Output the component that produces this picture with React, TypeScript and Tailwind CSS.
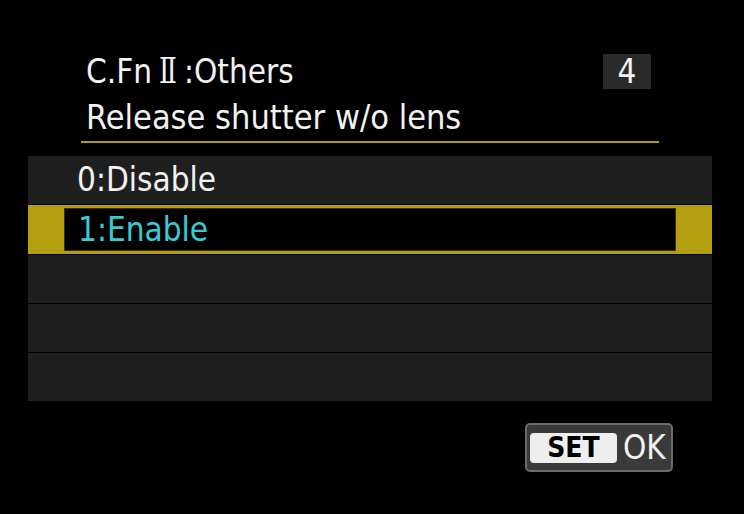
export default function App() {
  const font = "font-['DejaVu_Sans_Condensed','DejaVu_Sans',sans-serif]";

  return (
    <div className={`w-[744px] h-[514px] bg-black flex flex-col ${font}`}>

      {/* Header */}
      <div className="ml-[81px] mt-[50px] w-[578px] border-b-2 border-[#b09a10]">
        <div className="flex items-center justify-between pl-[5px] pr-[8px]">
          <span className="flex items-baseline gap-[4px] text-[33px] leading-[42px] text-[#f2f2f2]">
            <span>C.Fn</span>
            <span className="font-['DejaVu_Serif',serif] text-[35px] scale-x-[0.75]">Ⅱ</span>
            <span>:Others</span>
          </span>
          <span className="w-[48px] h-[35px] bg-[#2a2a2a] flex items-center justify-center text-[33px] text-[#f2f2f2]">
            4
          </span>
        </div>
        <div className="pl-[5px] text-[34px] leading-[48px] text-[#f2f2f2]">
          Release shutter w/o lens
        </div>
      </div>

      {/* Options */}
      <div className="ml-[28px] mr-[32px] mt-[13px] flex flex-col gap-[1px]">
        <div className="h-[48px] bg-[#1f1f1f] flex items-center pl-[49px] text-[33px] text-[#f2f2f2]">
          0:Disable
        </div>
        <div className="h-[49px] bg-[#b39f0f] flex items-center pl-[36px] pr-[36px]">
          <div className="flex-1 h-[43px] bg-black border border-[#3a3300] flex items-center pl-[13px] text-[33px] text-[#3cc8d6]">
            1:Enable
          </div>
        </div>
        <div className="h-[48px] bg-[#1f1f1f]" />
        <div className="h-[48px] bg-[#1f1f1f]" />
        <div className="h-[48px] bg-[#1f1f1f]" />
      </div>

      {/* SET OK */}
      <div className="flex justify-end mr-[71px] mt-[22px]">
        <div className="w-[148px] h-[49px] rounded-[5px] border-2 border-[#6b6b6b] bg-[#3a3a3a] flex items-center pl-[3px] gap-[6px]">
          <span className="w-[87px] h-[30px] rounded-[4px] bg-[#eeeeee] flex items-center justify-center text-[28px] font-bold text-black">
            SET
          </span>
          <span className="text-[33px] text-[#f2f2f2]">OK</span>
        </div>
      </div>

    </div>
  );
}
